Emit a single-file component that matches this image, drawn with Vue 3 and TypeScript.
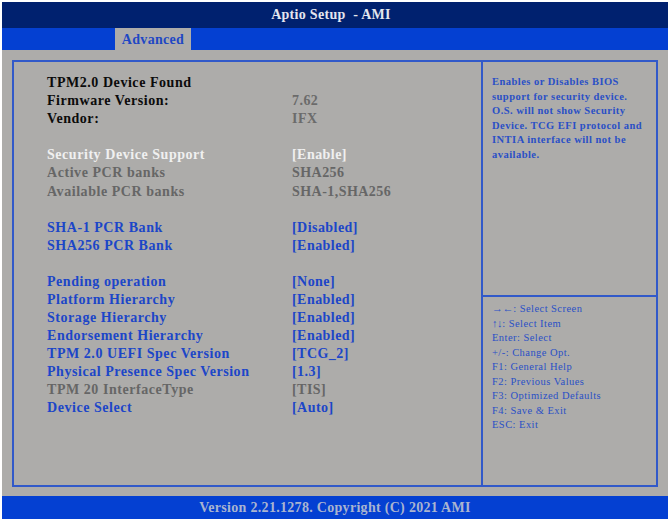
<script setup lang="ts">
interface Row { label: string; value?: string; kind?: string }
const rows: Row[] = [
  { label: 'TPM2.0 Device Found', kind: 'info' },
  { label: 'Firmware Version:', value: '7.62', kind: 'info' },
  { label: 'Vendor:', value: 'IFX', kind: 'info' },
  { label: '' },
  { label: 'Security Device Support', value: '[Enable]', kind: 'sel' },
  { label: 'Active PCR banks', value: 'SHA256', kind: 'off' },
  { label: 'Available PCR banks', value: 'SHA-1,SHA256', kind: 'off' },
  { label: '' },
  { label: 'SHA-1 PCR Bank', value: '[Disabled]', kind: 'on' },
  { label: 'SHA256 PCR Bank', value: '[Enabled]', kind: 'on' },
  { label: '' },
  { label: 'Pending operation', value: '[None]', kind: 'on' },
  { label: 'Platform Hierarchy', value: '[Enabled]', kind: 'on' },
  { label: 'Storage Hierarchy', value: '[Enabled]', kind: 'on' },
  { label: 'Endorsement Hierarchy', value: '[Enabled]', kind: 'on' },
  { label: 'TPM 2.0 UEFI Spec Version', value: '[TCG_2]', kind: 'on' },
  { label: 'Physical Presence Spec Version', value: '[1.3]', kind: 'on' },
  { label: 'TPM 20 InterfaceType', value: '[TIS]', kind: 'off' },
  { label: 'Device Select', value: '[Auto]', kind: 'on' },
]
const keys: { arrows?: string; text: string }[] = [
  { arrows: '→←', text: ': Select Screen' },
  { arrows: '↑↓', text: ': Select Item' },
  { text: 'Enter: Select' },
  { text: '+/-: Change Opt.' },
  { text: 'F1: General Help' },
  { text: 'F2: Previous Values' },
  { text: 'F3: Optimized Defaults' },
  { text: 'F4: Save & Exit' },
  { text: 'ESC: Exit' },
]
const help = [
  'Enables or Disables BIOS', 'support for security device.', 'O.S. will not show Security',
  'Device. TCG EFI protocol and', 'INTIA interface will not be', 'available.',
]
</script>

<template>
  <div class="screen">
    <header class="title">Aptio Setup&nbsp; - AMI</header>
    <nav class="tabs"><span class="tab">Advanced</span></nav>
    <main class="body">
      <div class="frame">
        <section class="settings">
          <div v-for="(r, i) in rows" :key="i" class="row" :class="r.kind">
            <span class="label">{{ r.label }}</span>
            <span class="value">{{ r.value }}</span>
          </div>
        </section>
        <aside class="side">
          <div class="help">
            <div v-for="h in help" :key="h">{{ h }}</div>
          </div>
          <div class="keys">
            <div v-for="k in keys" :key="k.text" class="key"><span v-if="k.arrows" class="arrows">{{ k.arrows }}</span>{{ k.text }}</div>
          </div>
        </aside>
      </div>
    </main>
    <footer class="foot">Version 2.21.1278. Copyright (C) 2021 AMI</footer>
  </div>
</template>

<style>
html, body { background: #fff; margin: 0; }
</style>

<style scoped>
.screen {
  width: 666px;
  height: 517px;
  margin: 2px 0 0 2px;
  display: flex;
  flex-direction: column;
  font-family: "Liberation Serif", serif;
  font-weight: bold;
  background: #adacaa;
}
.title {
  height: 26px;
  line-height: 26px;
  padding-right: 8px;
  background: #00216f;
  color: #e4e6ee;
  text-align: center;
  font-size: 14px;
  letter-spacing: 0.3px;
}
.tabs {
  height: 22px;
  background: #0440d2;
  padding-left: 113px;
  display: flex;
}
.tab {
  width: 76px;
  background: #adacaa;
  color: #1f48c4;
  text-align: center;
  line-height: 23px;
  font-size: 14px;
  letter-spacing: 0.3px;
}
.body {
  flex: 1;
  padding: 10px 10px 9px 10px;
  display: flex;
}
.frame {
  flex: 1;
  display: flex;
  border: 2px solid #3159c9;
}
.settings {
  width: 469px;
  padding: 12.25px 0 0 33px;
  border-right: 2px solid #3159c9;
  box-sizing: border-box;
}
.row {
  height: 18.06px;
  line-height: 18px;
  display: flex;
  font-size: 14px;
  letter-spacing: 0.55px;
  white-space: nowrap;
}
.label { width: 245px; }
.value { letter-spacing: 0.45px; }
.info .label { color: #0b0b0b; }
.info .value { color: #6b6b6b; }
.sel { color: #f0f0f0; }
.off { color: #666; }
.on { color: #1c46c8; }
.side {
  flex: 1;
  display: flex;
  flex-direction: column;
  color: #2a50c6;
}
.help {
  height: 235px;
  box-sizing: border-box;
  padding: 13px 8px 0 9px;
  border-bottom: 2px solid #3159c9;
  font-size: 10.5px;
  line-height: 14.5px;
  letter-spacing: 0.47px;
}
.keys {
  padding: 5px 0 0 9px;
  font-size: 10.5px;
  font-weight: normal;
  line-height: 14.5px;
  letter-spacing: 0.45px;
}
.key { height: 14.5px; }
.arrows {
  letter-spacing: -0.4px;
  font-size: 11px;
  line-height: 0;
}
.foot {
  height: 23px;
  line-height: 24px;
  background: #0440d2;
  color: #a9b4d0;
  text-align: center;
  font-size: 14px;
  letter-spacing: 0.3px;
}
</style>
